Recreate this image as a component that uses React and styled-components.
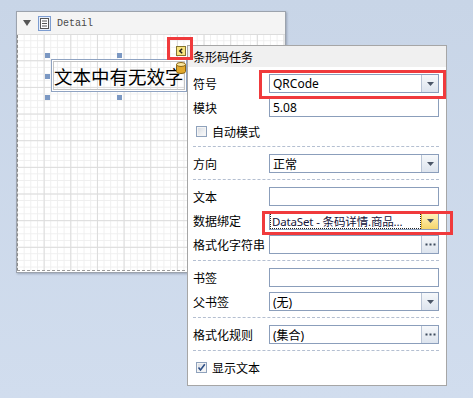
import React from 'react';
import styled, { createGlobalStyle } from 'styled-components';

const GlobalStyle = createGlobalStyle`
  html, body {
    margin: 0;
    padding: 0;
  }
  body {
    font-family: "Noto Sans", "Noto Sans CJK SC", sans-serif;
    font-size: 12px;
    color: #000;
  }
`

const Page = styled.div`
  position: relative;
  width: 473px;
  height: 398px;
  box-sizing: border-box;
  padding: 11px 0 0 16px;
  overflow: hidden;
  background: linear-gradient(180deg, #c8d5e7 0%, #d1ddee 100%);
`

/* ---------- report designer window ---------- */

const Designer = styled.div`
  width: 270px;
  height: 262px;
  box-sizing: border-box;
  display: flex;
  flex-direction: column;
  background: #fff;
  border: 1px solid #9ca3ad;
  box-shadow: 1px 1px 2px rgba(60, 70, 90, 0.35);
`

const BandHeader = styled.div`
  height: 22px;
  flex: none;
  display: flex;
  align-items: center;
  gap: 7px;
  padding-left: 6px;
  background: #f4f4f4;
  border-bottom: 1px solid #dcdcdc;
`

const BandTitle = styled.span`
  margin-left: -1px;
  font-family: "Liberation Mono", "DejaVu Sans Mono", monospace;
  font-size: 10px;
  color: #4a4a4a;
`

const Canvas = styled.div`
  position: relative;
  flex: 1;
  margin-bottom: 1px;
  border-left: 1px dashed #8c8c8c;
  border-bottom: 1px dashed #9a9a9a;
  background-color: #fff;
  background-image:
    linear-gradient(to right, #dcdcdc 1px, transparent 1px),
    linear-gradient(to bottom, #dcdcdc 1px, transparent 1px),
    linear-gradient(to right, #efefef 1px, transparent 1px),
    linear-gradient(to bottom, #efefef 1px, transparent 1px);
  background-size: 26.667px 26.667px, 26.667px 26.667px, 6.667px 6.667px, 6.667px 6.667px;
  background-position: -1px -1.4px;
`

const TextLabel = styled.div`
  position: absolute;
  left: 33px;
  top: 24px;
  width: 136px;
  height: 33px;
  box-sizing: border-box;
  display: flex;
  align-items: center;
  padding-left: 2px;
  border: 1px solid #8fa3c2;
  box-shadow: inset 0 0 0 1px #fff, inset 0 0 0 2px #c4c4c4;
  font-family: "Noto Sans CJK SC", sans-serif;
  font-size: 18.5px;
  white-space: nowrap;
  overflow: hidden;
`

const Handle = styled.div`
  position: absolute;
  left: ${p => p.x}px;
  top: ${p => p.y}px;
  width: 5px;
  height: 5px;
  background: #7b98c3;
`

const DbIcon = styled.svg`
  position: absolute;
  left: 124px;
  top: 2px;
`

/* ---------- smart tag panel ---------- */

const TaskPanel = styled.div`
  position: absolute;
  left: 187px;
  top: 45px;
  width: 260px;
  height: 341px;
  box-sizing: border-box;
  background: #fff;
  border: 1px solid #a6a6a6;
  font-family: "Noto Sans CJK SC", sans-serif;
  font-size: 12px;
`

const PanelHeader = styled.div`
  height: 21px;
  display: flex;
  align-items: center;
  padding-left: 5px;
  background: #f0f0f0;
`

const Section = styled.div`
  display: flex;
  flex-direction: column;
  gap: 5px;
  padding: ${p => p.first ? '7px 7px 5px 5px' : '7px 7px 6px 5px'};
`

const Divider = styled.div`
  margin: 0 7px 0 5px;
  border-top: 1px dashed #b4bfd1;
`

const Row = styled.div`
  display: grid;
  grid-template-columns: 76px 170px;
  align-items: center;
  height: 19px;
`

const Label = styled.span`
  white-space: nowrap;
`

const Field = styled.div`
  height: 19px;
  box-sizing: border-box;
  display: flex;
  align-items: stretch;
  border: 1px solid #8b9ebb;
  background: #fff;
`

const Value = styled.div`
  flex: 1;
  min-width: 0;
  display: flex;
  align-items: center;
  padding: 0 3px;
  font-family: "Noto Sans", "Noto Sans CJK SC", sans-serif;
  font-size: 12px;
  color: ${p => p.dark ? '#14143c' : '#000'};
  white-space: nowrap;
  overflow: hidden;
  ${p => p.focus && `
    margin: 2px 1px 1px 1px;
    padding: 0 1px;
    font-size: 11.5px;
    letter-spacing: -0.15px;
    outline: 1px dotted #222;
  `}
`

const DropButton = styled.div`
  width: 16px;
  flex: none;
  display: flex;
  align-items: center;
  justify-content: center;
  border-left: 1px solid ${p => p.hot ? '#e3b93c' : '#b9c4d5'};
  background: ${p => p.hot
    ? 'linear-gradient(180deg, #fff6c4 0%, #fbe69a 50%, #f5d56a 100%)'
    : 'linear-gradient(180deg, #f6f8fb 0%, #e9eef4 50%, #dde4ee 100%)'};
`

const CheckRow = styled.div`
  height: 19px;
  display: flex;
  align-items: center;
  gap: 5px;
  padding-left: 3px;
`

const Box = styled.div`
  width: 11px;
  height: 11px;
  box-sizing: border-box;
  display: flex;
  align-items: center;
  justify-content: center;
  border: 1px solid #8fa2bc;
  background: linear-gradient(135deg, #d4d8de 0%, #eef0f3 60%, #fafafa 100%);
  box-shadow: inset 0 0 0 1px #f4f4f4;
`

/* ---------- overlays ---------- */

const SmartTag = styled.div`
  position: absolute;
  left: 176px;
  top: 46px;
  width: 10px;
  height: 10px;
  box-sizing: border-box;
  display: flex;
  align-items: center;
  justify-content: center;
  border: 1px solid #857530;
  background: #f9e47f;
`

const Mark = styled.div`
  position: absolute;
  left: ${p => p.x}px;
  top: ${p => p.y}px;
  width: ${p => p.w}px;
  height: ${p => p.h}px;
  box-sizing: border-box;
  border: 3px solid #f03a3c;
`

const Arrow = () => (
  <svg width="7" height="4" viewBox="0 0 7 4">
    <path d="M0 0 H7 L3.5 4 Z" fill="#4b5667" />
  </svg>
)

const Dots = () => (
  <svg width="11" height="3" viewBox="0 0 11 3">
    <rect x="0.5" y="0.5" width="2" height="2" fill="#3d4a5c" />
    <rect x="4.5" y="0.5" width="2" height="2" fill="#3d4a5c" />
    <rect x="8.5" y="0.5" width="2" height="2" fill="#3d4a5c" />
  </svg>
)

const TextField = ({ children }) => (
  <Field>
    <Value>{children}</Value>
  </Field>
)

const Combo = ({ children, hot }) => (
  <Field>
    <Value focus={hot} dark={hot}>{children}</Value>
    <DropButton hot={hot}><Arrow /></DropButton>
  </Field>
)

const Ellipsis = ({ children }) => (
  <Field>
    <Value>{children}</Value>
    <DropButton><Dots /></DropButton>
  </Field>
)

const Check = ({ checked, children }) => (
  <CheckRow>
    <Box>
      {checked && (
        <svg width="9" height="9" viewBox="0 0 9 9">
          <path d="M1.5 4.5 L3.5 7 L7.8 1.2" fill="none" stroke="#2e4f86" strokeWidth="1.6" />
        </svg>
      )}
    </Box>
    <span>{children}</span>
  </CheckRow>
)

export default () => {
  return (
    <Page>
      <GlobalStyle />
      <Designer>
        <BandHeader>
          <svg width="8" height="6" viewBox="0 0 8 6">
            <path d="M0 0 H8 L4 6 Z" fill="#555" />
          </svg>
          <svg width="13" height="15" viewBox="0 0 13 15">
            <rect x="0.5" y="0.5" width="12" height="14" fill="#e6eefa" stroke="#7d9dd1" />
            <rect x="2.5" y="2.5" width="8" height="10" fill="#fff" stroke="#555" />
            <path d="M4 5 H9 M4 7.5 H9 M4 10 H9" stroke="#555" />
          </svg>
          <BandTitle>Detail</BandTitle>
        </BandHeader>
        <Canvas>
          <Handle x={27} y={18} />
          <Handle x={99} y={18} />
          <Handle x={27} y={39} />
          <Handle x={27} y={60} />
          <Handle x={99} y={60} />
          <TextLabel>
            文本中有无效字
            <DbIcon width="10" height="12" viewBox="0 0 10 12">
              <path d="M0.5 2.5 V9.5 A4.5 2 0 0 0 9.5 9.5 V2.5" fill="#e3a92c" stroke="#8a6312" />
              <ellipse cx="5" cy="2.5" rx="4.5" ry="2" fill="#fbe7a0" stroke="#8a6312" />
            </DbIcon>
          </TextLabel>
        </Canvas>
      </Designer>

      <TaskPanel>
        <PanelHeader>条形码任务</PanelHeader>
        <Section first>
          <Row>
            <Label>符号</Label>
            <Combo>QRCode</Combo>
          </Row>
          <Row>
            <Label>模块</Label>
            <TextField>5.08</TextField>
          </Row>
          <Check>自动模式</Check>
        </Section>
        <Divider />
        <Section>
          <Row>
            <Label>方向</Label>
            <Combo>正常</Combo>
          </Row>
        </Section>
        <Divider />
        <Section>
          <Row>
            <Label>文本</Label>
            <TextField />
          </Row>
          <Row>
            <Label>数据绑定</Label>
            <Combo hot>DataSet - 条码详情.商品...</Combo>
          </Row>
          <Row>
            <Label>格式化字符串</Label>
            <Ellipsis />
          </Row>
        </Section>
        <Divider />
        <Section>
          <Row>
            <Label>书签</Label>
            <TextField />
          </Row>
          <Row>
            <Label>父书签</Label>
            <Combo>(无)</Combo>
          </Row>
        </Section>
        <Divider />
        <Section>
          <Row>
            <Label>格式化规则</Label>
            <Ellipsis>(集合)</Ellipsis>
          </Row>
        </Section>
        <Divider />
        <Section>
          <Check checked>显示文本</Check>
        </Section>
      </TaskPanel>

      <SmartTag>
        <svg width="6" height="6" viewBox="0 0 6 6">
          <path d="M4.2 0.8 L1.8 3 L4.2 5.2" fill="none" stroke="#1c1c1c" strokeWidth="1.5" />
        </svg>
      </SmartTag>

      <Mark x={167} y={37} w={26} h={23} />
      <Mark x={259} y={70} w={187} h={29} />
      <Mark x={262} y={211} w={191} h={24} />
    </Page>
  );
}
